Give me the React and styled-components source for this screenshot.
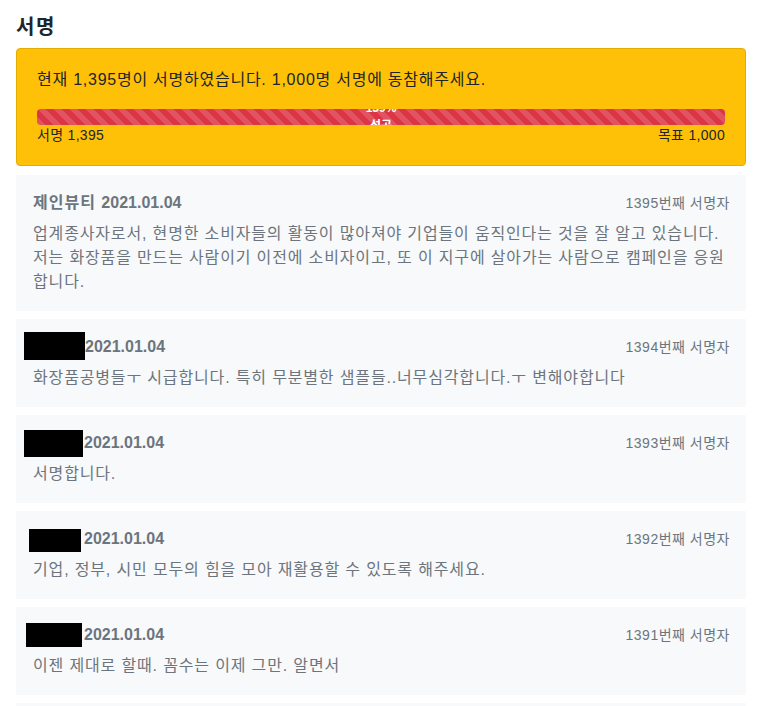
import styled, { createGlobalStyle } from "styled-components";

const GlobalStyle = createGlobalStyle`
  body {
    margin: 0;
    background: #ffffff;
    font-family: "Liberation Sans", "Noto Sans CJK KR", sans-serif;
    color: #212529;
  }
`;

const Page = styled.div`
  padding: 15px 15px 0 16px;
`;

const Title = styled.h2`
  margin: 0 0 9px 0;
  font-size: 20px;
  line-height: 24px;
  font-weight: 700;
  letter-spacing: 1.5px;
  color: #212529;
`;

const StatusBox = styled.div`
  background-color: #ffc107;
  border: 1px solid #e5ac00;
  border-radius: 4px;
  padding: 19px 20px;
  margin-bottom: 9px;
`;

const StatusText = styled.div`
  font-size: 16px;
  line-height: 24px;
  letter-spacing: 0.75px;
  margin-bottom: 17px;
`;

const Progress = styled.div`
  height: 16px;
  overflow: hidden;
  border-radius: 4px;
  background-color: #e9ecef;
  display: flex;
`;

const ProgressBar = styled.div`
  display: flex;
  flex-direction: column;
  justify-content: center;
  align-items: center;
  background-color: #dc3545;
  background-image: linear-gradient(
    45deg,
    rgba(255, 255, 255, 0.15) 25%,
    transparent 25%,
    transparent 50%,
    rgba(255, 255, 255, 0.15) 50%,
    rgba(255, 255, 255, 0.15) 75%,
    transparent 75%,
    transparent
  );
  background-size: 16px 16px;
  color: #ffffff;
  font-size: 12px;
  font-weight: 700;
  line-height: 18px;
  text-align: center;
  white-space: nowrap;
`;

const ProgressLabels = styled.div`
  display: flex;
  justify-content: space-between;
  font-size: 14px;
  line-height: 21px;
  letter-spacing: 0.3px;
`;

const SignList = styled.div`
  display: flex;
  flex-direction: column;
  gap: 8px;
`;

const SignCard = styled.div`
  background-color: #f8f9fa;
  padding: 16px 16px 17px 17px;
  color: #6c757d;
`;

const SignHeader = styled.div`
  display: flex;
  justify-content: space-between;
  align-items: center;
  height: 24px;
  margin-bottom: 7px;
`;

const SignName = styled.div`
  display: flex;
  align-items: center;
  font-size: 16px;
  font-weight: 700;
  line-height: 24px;
`;

const NameText = styled.span`
  letter-spacing: 1px;
`;

const Redaction = styled.span`
  display: inline-block;
  background: #000000;
  width: ${(p) => p.$w}px;
  height: ${(p) => p.$h}px;
  margin-left: ${(p) => p.$offset}px;
  margin-right: ${(p) => p.$gap}px;
  margin-top: ${(p) => p.$shift || 0}px;
`;

const SignOrder = styled.div`
  font-size: 14px;
  line-height: 21px;
  letter-spacing: 0.5px;
`;

const SignBody = styled.div`
  font-size: 16px;
  line-height: 24px;
  letter-spacing: 0.85px;
  margin-right: -2px;
`;

const signatures = [
  {
    order: 1395,
    name: "제인뷰티",
    date: "2021.01.04",
    text: "업계종사자로서, 현명한 소비자들의 활동이 많아져야 기업들이 움직인다는 것을 잘 알고 있습니다. 저는 화장품을 만드는 사람이기 이전에 소비자이고, 또 이 지구에 살아가는 사람으로 캠페인을 응원합니다.",
  },
  {
    order: 1394,
    redact: { w: 61, h: 28, offset: -9, gap: 0, shift: -2 },
    date: "2021.01.04",
    text: "화장품공병들ㅜ 시급합니다. 특히 무분별한 샘플들..너무심각합니다.ㅜ 변해야합니다",
  },
  {
    order: 1393,
    redact: { w: 59, h: 27, offset: -9, gap: 1, shift: 0 },
    date: "2021.01.04",
    text: "서명합니다.",
  },
  {
    order: 1392,
    redact: { w: 52, h: 23, offset: -4, gap: 3, shift: 2 },
    date: "2021.01.04",
    text: "기업, 정부, 시민 모두의 힘을 모아 재활용할 수 있도록 해주세요.",
  },
  {
    order: 1391,
    redact: { w: 56, h: 24, offset: -7, gap: 2, shift: 0 },
    date: "2021.01.04",
    text: "이젠 제대로 할때. 꼼수는 이제 그만. 알면서",
  },
  {
    order: 1390,
    redact: { w: 56, h: 24, offset: -7, gap: 2, shift: 0 },
    date: "2021.01.04",
    text: "응원합니다.",
  },
];

function App() {
  const count = 1395;
  const goal = 1000;
  const percent = Math.floor((count / goal) * 100);
  const barWidth = Math.min(percent, 100);

  return (
    <>
      <GlobalStyle />
      <Page>
        <Title>서명</Title>

        <StatusBox>
          <StatusText>
            현재 {count.toLocaleString()}명이 서명하였습니다.{" "}
            {goal.toLocaleString()}명 서명에 동참해주세요.
          </StatusText>
          <Progress>
            <ProgressBar style={{ width: `${barWidth}%` }}>
              <span>{percent}%</span>
              <span>성공</span>
            </ProgressBar>
          </Progress>
          <ProgressLabels>
            <span>서명 {count.toLocaleString()}</span>
            <span>목표 {goal.toLocaleString()}</span>
          </ProgressLabels>
        </StatusBox>

        <SignList>
          {signatures.map((s) => (
            <SignCard key={s.order}>
              <SignHeader>
                <SignName>
                  {s.redact ? (
                    <Redaction
                      $w={s.redact.w}
                      $h={s.redact.h}
                      $offset={s.redact.offset}
                      $gap={s.redact.gap}
                      $shift={s.redact.shift}
                    />
                  ) : (
                    <NameText>{s.name}&nbsp;</NameText>
                  )}
                  {s.date}
                </SignName>
                <SignOrder>{s.order}번째 서명자</SignOrder>
              </SignHeader>
              <SignBody>{s.text}</SignBody>
            </SignCard>
          ))}
        </SignList>
      </Page>
    </>
  );
}

export default App;
